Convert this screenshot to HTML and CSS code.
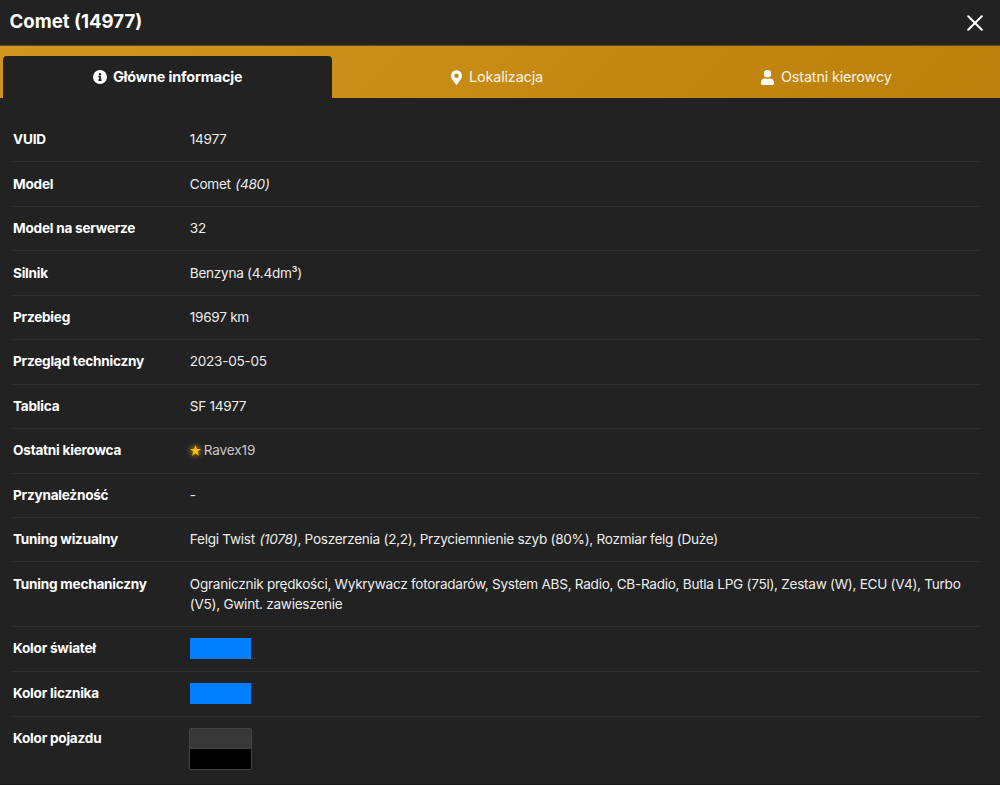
FILE: index.html
```html
<!DOCTYPE html>
<html lang="pl">
<head>
    <meta charset="UTF-8">
    <meta name="viewport" content="width=device-width, initial-scale=1.0">
    <title>Comet (14977)</title>
    <link rel="stylesheet" href="styles.css">
</head>
<body>
    <div class="modal">
        <div class="modal-header">
            <h1>Comet (14977)</h1>
            <button class="close" aria-label="Zamknij">
                <svg viewBox="0 0 16 16"><path d="M1.2 1.2l13.6 13.6M14.8 1.2L1.2 14.8"/></svg>
            </button>
        </div>

        <!-- Zakładki -->
        <div class="tabs">
            <a class="tab active">
                <svg class="icon" viewBox="0 0 512 512"><path d="M256 0a256 256 0 1 0 0 512 256 256 0 0 0 0-512zm0 108a44 44 0 1 1 0 88 44 44 0 0 1 0-88zm60 276c0 9-5 14-14 14h-92c-9 0-14-5-14-14v-28c0-9 5-14 14-14h14v-72h-14c-9 0-14-5-14-14v-28c0-9 5-14 14-14h64c9 0 14 5 14 14v114h14c9 0 14 5 14 14z"/></svg>
                <span>Główne informacje</span>
            </a>
            <a class="tab">
                <svg class="icon icon-pin" viewBox="0 0 384 512"><path d="M172 502C27 291 0 270 0 192a192 192 0 0 1 384 0c0 78-27 99-172 310-10 13-30 13-40 0zm20-230a80 80 0 1 0 0-160 80 80 0 0 0 0 160z"/></svg>
                <span>Lokalizacja</span>
            </a>
            <a class="tab">
                <svg class="icon icon-user" viewBox="0 0 448 512"><path d="M224 256a128 128 0 1 0 0-256 128 128 0 0 0 0 256zm90 32h-17a174 174 0 0 1-146 0h-17C60 288 0 348 0 422v42c0 27 21 48 48 48h352c27 0 48-21 48-48v-42c0-74-60-134-134-134z"/></svg>
                <span>Ostatni kierowcy</span>
            </a>
        </div>

        <!-- Dane pojazdu -->
        <div class="info">
            <div class="row"><div class="label">VUID</div><div class="value">14977</div></div>
            <div class="row"><div class="label">Model</div><div class="value">Comet <i>(480)</i></div></div>
            <div class="row"><div class="label">Model na serwerze</div><div class="value">32</div></div>
            <div class="row"><div class="label">Silnik</div><div class="value">Benzyna (4.4dm³)</div></div>
            <div class="row"><div class="label">Przebieg</div><div class="value">19697 km</div></div>
            <div class="row"><div class="label">Przegląd techniczny</div><div class="value">2023-05-05</div></div>
            <div class="row"><div class="label">Tablica</div><div class="value">SF 14977</div></div>
            <div class="row">
                <div class="label">Ostatni kierowca</div>
                <div class="value driver">
                    <svg class="star" viewBox="0 0 24 24"><path d="M12 0l3.1 8.6 8.9.2-7 5.5 2.5 8.9-7.5-5.1-7.5 5.1L7 14.3 0 8.8l8.9-.2z"/></svg>
                    <span>Ravex19</span>
                </div>
            </div>
            <div class="row"><div class="label">Przynależność</div><div class="value">-</div></div>
            <div class="row"><div class="label">Tuning wizualny</div><div class="value">Felgi Twist <i>(1078)</i>, Poszerzenia (2,2), Przyciemnienie szyb (80%), Rozmiar felg (Duże)</div></div>
            <div class="row"><div class="label">Tuning mechaniczny</div><div class="value">Ogranicznik prędkości, Wykrywacz fotoradarów, System ABS, Radio, CB-Radio, Butla LPG (75l), Zestaw (W), ECU (V4), Turbo (V5), Gwint. zawieszenie</div></div>
            <div class="row row-color"><div class="label">Kolor świateł</div><div class="value"><div class="color blue"></div></div></div>
            <div class="row row-color"><div class="label">Kolor licznika</div><div class="value"><div class="color blue"></div></div></div>
            <div class="row row-color">
                <div class="label">Kolor pojazdu</div>
                <div class="value">
                    <div class="vehicle-colors">
                        <div class="color gray"></div>
                        <div class="color black"></div>
                    </div>
                </div>
            </div>
        </div>
    </div>
</body>
</html>
```
FILE: styles.css
```css
* {
    box-sizing: border-box;
}
body {
    margin: 0;
    font-family: Inter, sans-serif;
    font-size: 13.6px;
    line-height: 20.3px;
    letter-spacing: -0.28px;
    background-color: #222;
    color: #ededed;
    overflow: hidden;
}
.modal {
    height: 785px;
    border-bottom: 1px solid #191919;
}
.modal-header {
    display: flex;
    justify-content: space-between;
    align-items: center;
    height: 45px;
    padding: 0 17.5px 2px 9.5px;
}
h1 {
    margin: 0;
    font-size: 18.6px;
    font-weight: 700;
    letter-spacing: 0;
    color: #fff;
}
.close {
    display: flex;
    padding: 2px 0 0;
    border: none;
    background: none;
}
.close svg {
    width: 16px;
    height: 16px;
    fill: none;
    stroke: #fff;
    stroke-width: 2;
    stroke-linecap: round;
}
.tabs {
    display: flex;
    height: 53px;
    padding: 10px 9px 0 3px;
    border-top: 1px solid #5b4a2a;
    background: linear-gradient(135deg, #d1961f, #bb800b);
}
.tab {
    display: flex;
    flex: 1;
    justify-content: center;
    align-items: center;
    gap: 6px;
    font-size: 14.4px;
    letter-spacing: -0.15px;
    color: #fbf3e4;
}
.tab.active {
    border-radius: 4px 4px 0 0;
    background-color: #222;
    font-weight: 700;
    color: #fff;
}
.icon {
    width: 14px;
    height: 14px;
    fill: #fff;
}
.icon-pin {
    width: 11px;
    height: 15px;
    margin-right: 1px;
}
.icon-user {
    width: 13px;
    height: 15px;
    margin-right: 1px;
}
.info {
    padding: 20px 20px 0 13px;
}
.row {
    display: flex;
    min-height: 44.45px;
    padding: 11.2px 0 11.9px;
    border-bottom: 1px solid #303030;
}
.row:last-child {
    border-bottom: none;
}
.label {
    flex: 0 0 176.8px;
    font-weight: 700;
    letter-spacing: -0.23px;
    color: #fff;
}
.value {
    flex: 1;
}
.value i {
    margin-left: 1px;
}
.driver {
    display: flex;
    align-items: center;
    gap: 3px;
    letter-spacing: -0.15px;
    color: #c8c8c8;
}
.star {
    width: 11px;
    height: 11px;
    fill: #ffc107;
    filter: drop-shadow(0 0 3px #ffc107);
    overflow: visible;
}
.row-color {
    min-height: 45px;
}
.color {
    width: 61px;
    height: 20.4px;
}
.blue {
    background-color: #007fff;
}
.gray {
    height: 19px;
    background-color: #383838;
}
.black {
    height: 21px;
    border-top: 1px solid #444;
    background-color: #000;
}
.vehicle-colors {
    width: 63px;
    margin: -0.6px 0 0 -1px;
    border: 1px solid #444;
    border-radius: 2px;
}
```
